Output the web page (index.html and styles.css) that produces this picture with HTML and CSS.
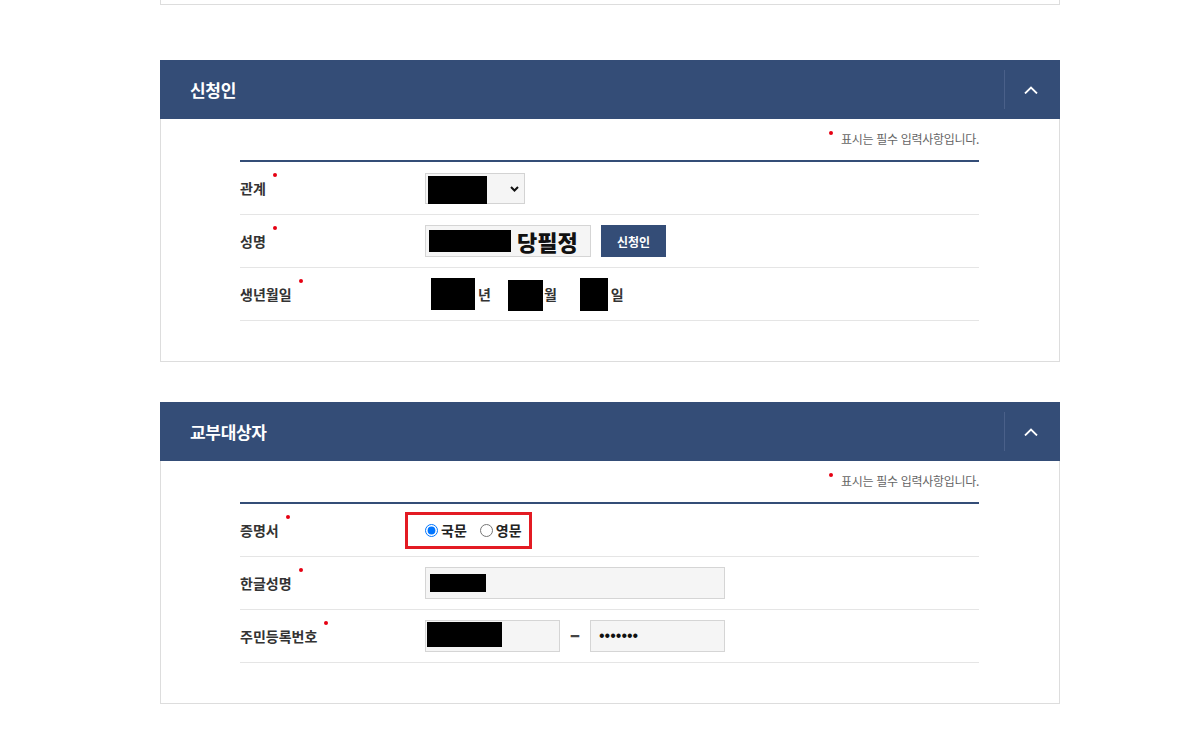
FILE: index.html
```html
<!DOCTYPE html>
<html lang="ko">
<head>
  <meta charset="UTF-8">
  <title>신청서 작성</title>
  <link rel="stylesheet" href="styles.css">
</head>
<body>
  <div class="page">
    <div class="prev-box"></div>

    <section class="panel">
      <div class="panel-head">
        <h2 class="panel-title">신청인</h2>
        <button class="panel-toggle" type="button">
          <svg width="14" height="8" viewBox="0 0 14 8"><polyline points="1,7.5 7,1.5 13,7.5" fill="none" stroke="#fff" stroke-width="1.8"/></svg>
        </button>
      </div>
      <div class="panel-body">
        <p class="req-note"><span class="dot"></span>표시는 필수 입력사항입니다.</p>
        <div class="form-table">
          <div class="form-row">
            <div class="form-label">관계<span class="dot"></span></div>
            <div class="form-value">
              <div class="select-box">
                <span class="mask mask-select"></span>
                <svg class="select-arrow" width="9" height="6" viewBox="0 0 9 6"><polyline points="1,1 4.5,4.5 8,1" fill="none" stroke="#111" stroke-width="2"/></svg>
              </div>
            </div>
          </div>
          <div class="form-row">
            <div class="form-label">성명<span class="dot"></span></div>
            <div class="form-value">
              <div class="text-input input-name">
                <span class="mask mask-name"></span>
                <span class="name-text">당필정</span>
              </div>
              <button class="btn-navy" type="button">신청인</button>
            </div>
          </div>
          <div class="form-row">
            <div class="form-label">생년월일<span class="dot"></span></div>
            <div class="form-value date-field">
              <span class="mask mask-year"></span>
              <span class="unit unit-year">년</span>
              <span class="mask mask-month"></span>
              <span class="unit unit-month">월</span>
              <span class="mask mask-day"></span>
              <span class="unit unit-day">일</span>
            </div>
          </div>
        </div>
      </div>
    </section>

    <section class="panel">
      <div class="panel-head">
        <h2 class="panel-title">교부대상자</h2>
        <button class="panel-toggle" type="button">
          <svg width="14" height="8" viewBox="0 0 14 8"><polyline points="1,7.5 7,1.5 13,7.5" fill="none" stroke="#fff" stroke-width="1.8"/></svg>
        </button>
      </div>
      <div class="panel-body">
        <p class="req-note"><span class="dot"></span>표시는 필수 입력사항입니다.</p>
        <div class="form-table">
          <div class="form-row">
            <div class="form-label">증명서<span class="dot"></span></div>
            <div class="form-value">
              <div class="cert-box">
                <label class="radio"><input type="radio" name="cert" checked>국문</label>
                <label class="radio"><input type="radio" name="cert">영문</label>
              </div>
            </div>
          </div>
          <div class="form-row">
            <div class="form-label">한글성명<span class="dot"></span></div>
            <div class="form-value">
              <div class="text-input input-wide">
                <span class="mask mask-kname"></span>
              </div>
            </div>
          </div>
          <div class="form-row">
            <div class="form-label">주민등록번호<span class="dot"></span></div>
            <div class="form-value">
              <div class="text-input input-half input-front">
                <span class="mask mask-front"></span>
              </div>
              <span class="dash">–</span>
              <div class="text-input input-half input-back">
                <span class="secret">•••••••</span>
              </div>
            </div>
          </div>
        </div>
      </div>
    </section>
  </div>
</body>
</html>
```

FILE: styles.css
```css
* {
  box-sizing: border-box;
}

body {
  margin: 0;
  background: #fff;
  color: #333;
  font-family: "Noto Sans CJK KR", "Noto Sans", sans-serif;
}

.page {
  width: 900px;
  margin-left: 160px;
}

.prev-box {
  height: 5px;
  border: 1px solid #ddd;
  border-top: 0;
}

.panel {
  margin-top: 55px;
}

.panel + .panel {
  margin-top: 40px;
}

.panel-head {
  height: 59px;
  background: #344d77;
  display: flex;
  align-items: center;
  padding-left: 30px;
}

.panel-title {
  flex: 1;
  margin: 0;
  font-size: 17px;
  font-weight: 700;
  letter-spacing: -0.3px;
  color: #fff;
}

.panel-toggle {
  width: 56px;
  height: 39px;
  padding: 0 4px 0 0;
  border: 0;
  border-left: 1px solid #4a6089;
  background: none;
  display: flex;
  align-items: center;
  justify-content: center;
  cursor: pointer;
}

.panel-body {
  border: 1px solid #ddd;
  border-top: 0;
  padding: 10px 80px 40px 79px;
}

.req-note {
  margin: 0 0 11px;
  text-align: right;
  font-size: 12px;
  line-height: 20px;
  letter-spacing: -0.3px;
  color: #666;
}

.req-note .dot {
  display: inline-block;
  vertical-align: top;
  width: 4px;
  height: 4px;
  margin: 2px 8px 0 0;
  border-radius: 50%;
  background: #e60012;
}

.form-table {
  border-top: 2px solid #344d77;
}

.form-row {
  display: flex;
  align-items: center;
  height: 53px;
  border-bottom: 1px solid #e5e5e5;
}

.form-label {
  width: 185px;
  display: flex;
  align-items: flex-start;
  font-size: 14px;
  line-height: 20px;
  font-weight: 700;
  color: #333;
}

.form-label .dot {
  width: 4px;
  height: 4px;
  margin: -5px 0 0 7px;
  border-radius: 50%;
  background: #e60012;
}

.form-value {
  display: flex;
  align-items: center;
}

.mask {
  display: block;
  background: #000;
}

.select-box {
  width: 100px;
  height: 31px;
  padding: 2px 0 0 2px;
  border: 1px solid #d3d3d3;
  background: #f5f5f5;
  display: flex;
  justify-content: space-between;
}

.mask-select {
  width: 59px;
  height: 28px;
}

.select-arrow {
  align-self: center;
  margin: -1px 5px 0 0;
}

.text-input {
  height: 32px;
  border: 1px solid #d5d5d5;
  background: #f5f5f5;
  display: flex;
  align-items: center;
}

.input-name {
  width: 166px;
  padding-left: 3px;
}

.mask-name {
  width: 82px;
  height: 22px;
}

.name-text {
  margin-left: 6px;
  font-size: 22px;
  line-height: 1;
  font-weight: 900;
  color: #111;
}

.btn-navy {
  width: 65px;
  height: 32px;
  margin-left: 10px;
  border: 0;
  background: #344d77;
  color: #fff;
  font-family: inherit;
  font-size: 12px;
  font-weight: 700;
  cursor: pointer;
}

.date-field .unit {
  font-size: 14px;
  font-weight: 700;
  color: #333;
}

.mask-year {
  width: 44px;
  height: 32px;
  margin-left: 6px;
}

.unit-year {
  margin-left: 3px;
}

.mask-month {
  width: 35px;
  height: 31px;
  margin: 3px 0 0 17px;
}

.unit-month {
  margin-left: 1px;
}

.mask-day {
  width: 28px;
  height: 33px;
  margin-left: 23px;
}

.unit-day {
  margin-left: 3px;
}

.cert-box {
  margin-left: -20px;
  height: 37px;
  padding: 0 7px 0 17px;
  border: 3px solid #e31b23;
  display: flex;
  align-items: center;
}

.radio {
  display: flex;
  align-items: center;
  font-size: 14px;
  font-weight: 700;
  color: #222;
}

.radio + .radio {
  margin-left: 13px;
}

.radio input {
  width: 13px;
  height: 13px;
  margin: 0 3px 0 0;
}

.input-wide {
  width: 300px;
  padding-left: 4px;
}

.mask-kname {
  width: 56px;
  height: 18px;
}

.input-half {
  width: 135px;
}

.input-front {
  align-items: flex-start;
  padding: 1px 0 0 1px;
}

.mask-front {
  width: 75px;
  height: 25px;
}

.dash {
  width: 30px;
  margin-top: -5px;
  text-align: center;
  font-size: 19px;
  font-weight: 900;
  color: #444;
}

.input-back {
  padding-left: 8px;
}

.secret {
  font-family: "Liberation Sans", sans-serif;
  font-size: 16px;
  color: #111;
}
```
